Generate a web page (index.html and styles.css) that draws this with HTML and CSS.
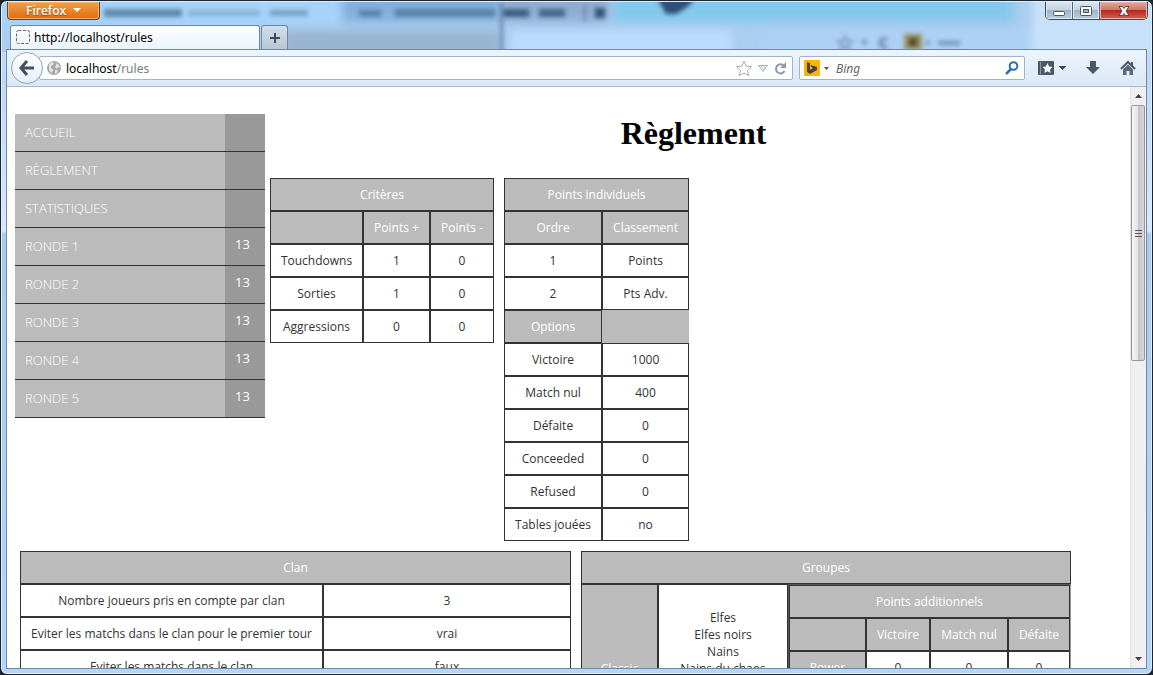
FILE: index.html
```html
<!DOCTYPE html>
<html lang="fr">
<head>
<meta charset="utf-8">
<title>http://localhost/rules</title>
<link rel="stylesheet" href="styles.css">
</head>
<body>
<div class="window">
  <svg class="glass" aria-hidden="true">
    <rect width="100%" height="50" fill="#abcdf0"/>
    <g class="wide">
      <rect x="-10" y="-6" width="350" height="30" fill="#a5d3fa"/>
      <rect x="280" y="28" width="218" height="30" fill="#9ab5d1"/>
      <rect x="340" y="-8" width="160" height="28" fill="#82afdc"/>
      <rect x="502" y="-8" width="105" height="28" fill="#8fadd2"/>
      <rect x="510" y="28" width="220" height="40" fill="#bbdcfc"/>
      <rect x="612" y="-10" width="400" height="30" fill="#83c9ec"/>
      <rect x="760" y="28" width="290" height="40" fill="#add0f5"/>
      <rect x="1030" y="-16" width="140" height="80" fill="#c8e1fb"/>
    </g>
    <rect class="soft" x="498" y="0" width="3" height="50" fill="#6987a8"/>
    <path class="soft" d="M655-4H694L684 6 674 12H664Z" fill="#2d4f78"/>
    <g class="soft" fill="#345877">
      <rect x="102" y="7" width="78" height="8" opacity=".6"/>
      <rect x="186" y="8" width="72" height="6" opacity=".25"/>
      <rect x="268" y="8" width="38" height="6" opacity=".4"/>
      <rect x="357" y="8" width="22" height="7" opacity=".5"/>
      <rect x="393" y="7" width="100" height="8" opacity=".5"/>
      <rect x="501" y="7" width="26" height="8" opacity=".9"/>
      <rect x="537" y="7" width="26" height="8" opacity=".8"/>
      <rect x="593" y="6" width="10" height="10"/>
      <rect x="582" y="2" width="2" height="18" opacity=".5"/>
    </g>
    <g class="soft">
      <path d="M843 34l2 5h5l-4 3 2 6-5-3-5 3 2-6-4-3h5z" fill="none" stroke="#7f9bb9" stroke-width="2"/>
      <rect x="902" y="32" width="18" height="16" fill="#9a935a"/>
      <rect x="907" y="36" width="8" height="8" fill="#4e4b32"/>
      <path d="M860 40h5M885 38a4 4 0 1 0 0 6M924 41h4M936 41h22" stroke="#7590b0" stroke-width="4" fill="none"/>
    </g>
  </svg>

  <header class="titlebar">
    <div class="caption">
      <button class="app-menu" type="button">Firefox
        <svg width="8" height="4" aria-hidden="true"><path d="M0 0h8L4 4z" fill="#fff"/></svg>
      </button>
      <div class="win-buttons">
        <button type="button" class="win-button" aria-label="Réduire"><svg width="14" height="14"><rect x="1.500" y="7.500" width="11" height="4" rx="1" fill="#fff" stroke="#4a5566"/></svg></button>
        <button type="button" class="win-button" aria-label="Agrandir"><svg width="14" height="14"><rect x="1.500" y="2.500" width="11" height="9" rx="1" fill="#fff" stroke="#4a5566"/><rect x="4.500" y="5.500" width="5" height="3" fill="#9bb5d0" stroke="#4a5566"/></svg></button>
        <button type="button" class="win-button close" aria-label="Fermer"><svg width="14" height="14"><path d="M2 2.500h3.500L7 4.500l1.500-2H12L9 7l3 4.500H8.500L7 9.500l-1.500 2H2L5 7z" fill="#fff" stroke="#6b3a40"/></svg></button>
      </div>
    </div>
    <div class="tabs">
      <div class="tab">
        <svg width="15" height="15" aria-hidden="true"><rect x=".5" y=".5" width="13" height="13" rx="2" fill="none" stroke="#666" stroke-dasharray="3 1.500"/></svg>
        <span>http://localhost/rules</span>
      </div>
      <button class="new-tab" type="button" aria-label="Nouvel onglet"><svg width="12" height="12"><path d="M6 1v10M1 6h10" stroke="#3d4b5b" stroke-width="2"/></svg></button>
    </div>
  </header>

  <div class="client">
    <nav class="toolbar">
      <button class="back" type="button" aria-label="Précédent"><svg width="18" height="18"><path d="M9 2L3 9l6 7M3.500 9H16" fill="none" stroke="#414f5e" stroke-width="3"/></svg></button>
      <div class="address">
        <svg width="14" height="14" aria-hidden="true"><circle cx="7" cy="7" r="7" fill="#a6a6a6"/><path d="M2 3l3-2 2 1-1 2-2 1v2l2 1v2l-2 2-2-3zM9 2l3 2 1 3-2-1-1 2-2-2 1-2zM8 9l3 0-1 3-2 1z" fill="#e3e3e3"/></svg>
        <div class="url" role="textbox" aria-label="Adresse">localhost<span class="path">/rules</span></div>
        <svg width="52" height="17" aria-hidden="true"><path d="M9 1l2.300 5 5.200.6-4 3.700 1.200 5.400L9 13l-4.700 2.700 1.200-5.400-4-3.700L6.700 6z" fill="#fff" stroke="#aaa"/><path d="M23.500 5.500h9l-4.500 6z" fill="#dfe5ec" stroke="#a7b2bf"/><path d="M49 6a4.500 4.500 0 1 0 .5 5" fill="none" stroke="#8c99a8" stroke-width="2"/><path d="M51 2v6h-6z" fill="#8c99a8"/></svg>
      </div>
      <div class="search">
        <svg width="27" height="16" aria-hidden="true"><rect width="16" height="16" fill="#ffb400"/><path d="M3 2l3 1v7l3-2-1.500-.7L6.500 5 13 7v3l-7 4-3-2z" fill="#444"/><path d="M20 7h5l-2.500 3z" fill="#555"/></svg>
        <input type="text" placeholder="Bing" aria-label="Recherche Bing">
        <svg width="14" height="14" aria-hidden="true"><circle cx="8.500" cy="5" r="3.800" fill="none" stroke="#2f6dad" stroke-width="2"/><path d="M6 8l-5 5" stroke="#2f6dad" stroke-width="2.500"/></svg>
      </div>
      <button class="tool" type="button" aria-label="Marque-pages"><svg width="28" height="16"><rect y="1" width="16" height="14" rx="1" fill="#4b5766"/><path d="M2.500 2v12" stroke="#8995a3"/><path d="M9.500 3l1.500 3.500 3.500.5-2.500 2.500.6 3.500-3.100-1.700L6.400 13 7 9.500 4.500 7 8 6.500z" fill="#fff"/><path d="M20.500 6h8L24.500 10z" fill="#3b4653"/></svg></button>
      <button class="tool" type="button" aria-label="Téléchargements"><svg width="14" height="16"><path d="M4 1h6v6h4l-7 7-7-7h4z" fill="#4b5766"/></svg></button>
      <button class="tool" type="button" aria-label="Accueil"><svg width="16" height="16"><path d="M1 9l7-7 7 7M12 2v4" fill="none" stroke="#4b5766" stroke-width="2"/><path d="M3 9.500l5-5 5 5V15H9.500v-4h-3v4H3z" fill="#5c6877"/></svg></button>
    </nav>

    <div class="viewport">
      <main class="page">
        <div class="top">
          <ul class="menu">
            <li><a href="#">Accueil</a><span></span></li>
            <li><a href="#">Règlement</a><span></span></li>
            <li><a href="#">Statistiques</a><span></span></li>
            <li><a href="#">Ronde 1</a><span>13</span></li>
            <li><a href="#">Ronde 2</a><span>13</span></li>
            <li><a href="#">Ronde 3</a><span>13</span></li>
            <li><a href="#">Ronde 4</a><span>13</span></li>
            <li><a href="#">Ronde 5</a><span>13</span></li>
          </ul>
          <div class="content">
            <h1>Règlement</h1>
            <div class="tables">
              <table class="grid criteria">
                <colgroup><col class="name"><col class="plus"><col class="minus"></colgroup>
                <tr><th colspan="3">Critères</th></tr>
                <tr><th></th><th>Points +</th><th>Points -</th></tr>
                <tr><td>Touchdowns</td><td>1</td><td>0</td></tr>
                <tr><td>Sorties</td><td>1</td><td>0</td></tr>
                <tr><td>Aggressions</td><td>0</td><td>0</td></tr>
              </table>
              <table class="grid individual">
                <colgroup><col class="order"><col class="rank"></colgroup>
                <tr><th colspan="2">Points individuels</th></tr>
                <tr><th>Ordre</th><th>Classement</th></tr>
                <tr><td>1</td><td>Points</td></tr>
                <tr><td>2</td><td>Pts Adv.</td></tr>
                <tr><th>Options</th><td class="filler"></td></tr>
                <tr><td>Victoire</td><td>1000</td></tr>
                <tr><td>Match nul</td><td>400</td></tr>
                <tr><td>Défaite</td><td>0</td></tr>
                <tr><td>Conceeded</td><td>0</td></tr>
                <tr><td>Refused</td><td>0</td></tr>
                <tr><td>Tables jouées</td><td>no</td></tr>
              </table>
            </div>
          </div>
        </div>
        <div class="tables">
          <table class="grid clan">
            <colgroup><col class="rule"><col class="value"></colgroup>
            <tr><th colspan="2">Clan</th></tr>
            <tr><td>Nombre joueurs pris en compte par clan</td><td>3</td></tr>
            <tr><td>Eviter les matchs dans le clan pour le premier tour</td><td>vrai</td></tr>
            <tr><td>Eviter les matchs dans le clan</td><td>faux</td></tr>
          </table>
          <table class="grid groups">
            <colgroup><col class="group"><col class="races"><col class="extra"></colgroup>
            <tr><th colspan="3">Groupes</th></tr>
            <tr class="group-row">
              <th>Classic</th>
              <td class="race-list">Elfes<br>Elfes noirs<br>Nains<br>Nains du chaos</td>
              <td class="nested">
                <table class="grid bonus">
                  <colgroup><col class="label"><col class="win"><col class="draw"><col class="loss"></colgroup>
                  <tr><th colspan="4">Points additionnels</th></tr>
                  <tr><th></th><th>Victoire</th><th>Match nul</th><th>Défaite</th></tr>
                  <tr><th>Power</th><td>0</td><td>0</td><td>0</td></tr>
                </table>
              </td>
            </tr>
          </table>
        </div>
      </main>
      <div class="scrollbar" aria-hidden="true">
        <svg width="7" height="4"><path d="M0 4h7L3.500 0z" fill="#444"/></svg>
        <div class="track"><div class="thumb"><svg width="7" height="8"><path d="M0 1.500h7M0 4.500h7M0 7.500h7" stroke="#555"/></svg></div></div>
        <svg width="7" height="4"><path d="M0 0h7L3.500 4z" fill="#444"/></svg>
      </div>
    </div>
  </div>
</div>
</body>
</html>
```
FILE: styles.css
```css
* { box-sizing: border-box; }

body {
  margin: 0;
  background: #1c2530;
  font: 12px/17px "Open Sans", "Noto Sans", sans-serif;
}

button { padding: 0; border: 0; background: none; font: inherit; }
svg { display: block; flex: none; }

/* Window frame */
.window {
  position: relative;
  display: flex;
  flex-direction: column;
  height: 100vh;
  padding: 1px 5px 5px;
  overflow: hidden;
  border: 1px solid #1c2530;
  border-radius: 7px;
  background: linear-gradient(#c0dcf9 0, #bcdaf8 80px, #d9e8fa 230px, #a9cbee 233px, #b5d6fa 100%);
  box-shadow: inset 0 0 0 1px #e1f0fd;
}
.glass {
  position: absolute;
  top: 1px;
  left: 1px;
  width: calc(100% - 2px);
  height: 50px;
  border-radius: 6px 6px 0 0;
}
.soft { filter: blur(2px); }
.wide { filter: blur(5px); }
.titlebar { position: relative; flex: none; height: 47px; }
.caption { display: flex; justify-content: space-between; height: 23px; }

.app-menu {
  display: flex;
  align-items: center;
  gap: 7px;
  height: 18px;
  padding: 0 18px 1px 18px;
  margin-left: 1px;
  border: 1px solid #7a3c12;
  border-top: 0;
  border-radius: 0 0 4px 4px;
  background: linear-gradient(#f2a04b, #e98628 50%, #dd6c12);
  box-shadow: inset 0 0 0 1px #f4b26e;
  color: #fff;
  font-weight: 600;
  text-shadow: 0 1px 1px #8b4510;
}
.win-buttons {
  display: flex;
  height: 18px;
  margin-right: -1px;
  border: 1px solid #3f4b5a;
  border-top: 0;
  border-radius: 0 0 5px 5px;
  overflow: hidden;
}
.win-button {
  display: grid;
  place-items: center;
  width: 27px;
  border-right: 1px solid #56677b;
  background: linear-gradient(#dce6f0, #c3d1df 48%, #a0b4c8 50%, #bccede);
  box-shadow: inset 0 0 0 1px #dce9f5;
}
.win-button.close {
  width: 47px;
  border: 0;
  background: linear-gradient(#e3a99c, #d27462 48%, #b5281b 50%, #d4614c);
  box-shadow: inset 0 0 0 1px #eab2a6;
}

.tabs { display: flex; gap: 1px; height: 24px; padding-left: 4px; }
.tab {
  display: flex;
  align-items: center;
  gap: 3px;
  width: 250px;
  padding: 0 5px;
  border: 1px solid #6e88a3;
  border-bottom: 0;
  border-radius: 3px 3px 0 0;
  background: linear-gradient(#fff, #ebf3fc);
  color: #000;
  font-family: "Noto Sans", sans-serif;
}
.new-tab {
  display: grid;
  place-items: center;
  width: 27px;
  border: 1px solid #6e88a3;
  border-bottom: 0;
  border-radius: 3px 3px 0 0;
  background: linear-gradient(#d1dfed, #b9c7d5);
}

/* Browser chrome */
.client {
  position: relative;
  display: flex;
  flex: 1;
  flex-direction: column;
  min-height: 0;
  border: 1px solid #6f88a3;
  background: #fff;
}
.toolbar {
  display: flex;
  flex: none;
  align-items: center;
  height: 37px;
  padding: 0 10px 0 4px;
  border-bottom: 1px solid #a5bad1;
  background: linear-gradient(#edf4fc, #dae8f6);
}
.back {
  z-index: 1;
  display: grid;
  place-items: center;
  width: 32px;
  height: 32px;
  margin-right: -4px;
  border: 1px solid #8fa5bd;
  border-radius: 50%;
  background: linear-gradient(#fff, #e6eef7);
}
.address, .search {
  display: flex;
  align-items: center;
  height: 24px;
  border: 1px solid #9fb3ca;
  border-radius: 2px;
  background: #fff;
  font-family: "Noto Sans", sans-serif;
}
.address { flex: 1; padding: 0 5px 0 7px; }
.url { flex: 1; padding-left: 5px; color: #000; }
.path { color: #7c7c7c; }
.search { width: 226px; margin: 0 13px 0 6px; padding: 0 5px 0 4px; }
.search input {
  flex: 1;
  min-width: 0;
  padding: 0 5px;
  border: 0;
  outline: 0;
  background: none;
  font: italic 12px/17px "Noto Sans", sans-serif;
}
.search input::placeholder { color: #666; opacity: 1; }
.tool + .tool { margin-left: 20px; }

.viewport { display: flex; flex: 1; min-height: 0; }
.page { flex: 1; min-width: 0; padding: 27px 8px 0; overflow: hidden; }

.scrollbar {
  display: flex;
  flex-direction: column;
  align-items: center;
  gap: 7px;
  width: 16px;
  padding: 7px 0;
  border-left: 1px solid #e3e3e3;
  background: #f0f0f0;
}
.track { flex: 1; width: 100%; padding-right: 1px; }
.thumb {
  display: grid;
  place-items: center;
  height: 47%;
  border: 1px solid #979797;
  border-radius: 2px;
  background: linear-gradient(90deg, #f5f5f5, #e6e6e8 45%, #c6c6ca 55%, #d8d8dc);
}

/* Page */
.top { display: flex; }
.menu {
  flex: none;
  width: 250px;
  margin: 0;
  padding: 0;
  list-style: none;
  color: #fff;
  font-size: 13px;
}
.menu li { display: flex; height: 38px; border-bottom: 1px solid #333; background: #bbb; }
.menu a {
  flex: 1;
  padding: 10px;
  color: inherit;
  font-weight: 300;
  text-decoration: none;
  text-transform: uppercase;
}
.menu span { width: 40px; padding: 8px 15px 0 10px; background: #999; text-align: center; }

.content { flex: 1; min-width: 0; }
h1 {
  margin: 0 0 21px;
  color: #000;
  font: bold 32px/38px "Liberation Serif", serif;
  text-align: center;
}
.tables { display: flex; align-items: flex-start; gap: 10px; padding: 5px; }

.grid {
  flex: none;
  table-layout: fixed;
  border-spacing: 0;
  color: #333;
  text-align: center;
}
.grid th, .grid td { height: 33px; padding: 7px 0; border: 1px solid #333; }
.grid td { background: #fff; }
.grid th { background: #bbb; color: #fff; font-weight: 400; }
.grid .filler { border: 0; background: #bbb; }

.criteria { width: 224px; }
.name { width: 93px; }
.plus { width: 67px; }
.minus { width: 64px; }

.individual { width: 185px; }
.order { width: 98px; }
.rank { width: 87px; }

.clan { width: 551px; }
.rule { width: 303px; }
.value { width: 248px; }

.groups { width: 490px; }
.group { width: 77px; }
.races { width: 130px; }
.extra { width: 283px; }
.group-row { height: 168px; }
.grid .race-list { padding-top: 24px; vertical-align: top; }
.grid .nested { padding: 0; border: 0; vertical-align: top; }

.bonus { width: 283px; border: 1px solid #999; border-top-color: #555; border-left-color: #555; }
.label { width: 77px; }
.win { width: 64px; }
.draw { width: 78px; }
.loss { width: 62px; }
```
